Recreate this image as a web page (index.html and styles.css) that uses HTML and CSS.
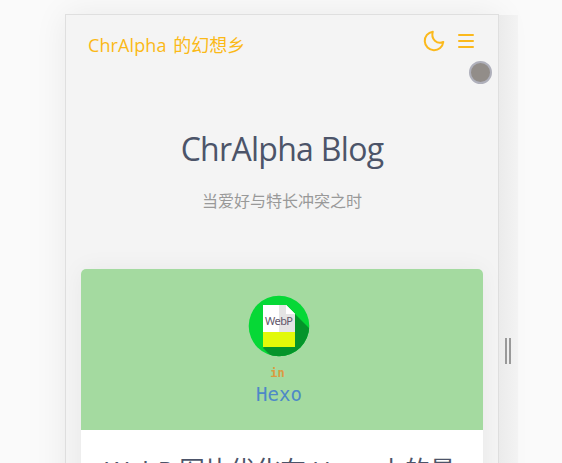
FILE: index.html
```html
<!DOCTYPE html>
<html lang="zh-CN">
<head>
<meta charset="utf-8">
<title>ChrAlpha Blog</title>
<link rel="stylesheet" href="styles.css">
</head>
<body>
<div class="preview">
  <div class="device">
    <header class="nav">
      <a class="brand">ChrAlpha <span class="brand-cjk">的幻想乡</span></a>
      <div class="actions">
        <svg class="moon" width="22" height="22" viewBox="0 0 22 22"><path d="M9.8 1.7A9.3 9.3 0 1 0 20.3 12C14.2 14.8 7.5 9.1 9.8 1.7Z"/></svg>
        <svg class="menu" width="16" height="16" viewBox="0 0 16 16"><path d="M1 2H15M1 8H15M1 14H15"/></svg>
      </div>
    </header>
    <section class="hero">
      <h1>ChrAlpha Blog</h1>
      <p>当爱好与特长冲突之时</p>
    </section>
    <article class="card">
      <div class="cover">
        <svg width="62" height="62" viewBox="0 0 62 62">
          <defs><clipPath id="disc"><circle cx="31" cy="31" r="30.3"/></clipPath></defs>
          <circle cx="31" cy="31" r="30.3" fill="#06d836"/>
          <path clip-path="url(#disc)" d="M15 53L47 19L70 42V70H32Z" fill="#05942a"/>
          <path d="M15 10H38L47 19V52H15Z" fill="#fff"/>
          <path d="M31 10H38L47 19V37H31Z" fill="#e4e4e4"/>
          <path d="M38 10L47 19H38Z" fill="#fff"/>
          <path d="M15 37H47V52H15Z" fill="#e2f909"/>
          <text class="webp" x="17" y="30" textLength="28">WebP</text>
        </svg>
        <span class="in">in</span>
        <span class="hexo">Hexo</span>
      </div>
      <h2>WebP 图片优化在 Hexo 上的最佳实践</h2>
    </article>
    <span class="touch"></span>
  </div>
  <div class="resizer"><span class="grip"></span></div>
</div>
</body>
</html>
```
FILE: styles.css
```css
* { box-sizing: border-box; }
body {
  margin: 0;
  height: 463px;
  overflow: hidden;
  background: #fafafa;
  font-family: "Open Sans", "Noto Sans CJK SC", sans-serif;
}
.preview {
  display: flex;
  height: 463px;
  padding: 14px 0 0 65px;
  overflow: hidden;
}
.device {
  position: relative;
  width: 434px;
  height: 600px;
  border: 1px solid #dfdfdf;
  background: #f4f4f4;
  box-shadow: 0 0 32px rgba(0, 0, 0, .07);
}
.nav {
  display: flex;
  justify-content: space-between;
  align-items: center;
  height: 60px;
  padding: 0 24px 0 22px;
  color: #fbb917;
}
.brand {
  padding-bottom: 2px;
  font-size: 18px;
  letter-spacing: .1px;
  white-space: nowrap;
}
.brand-cjk { margin-left: 2px; letter-spacing: 0; }
.actions {
  display: flex;
  align-items: center;
  gap: 13px;
  padding-bottom: 8px;
}
.actions svg {
  fill: none;
  stroke: #fbb91c;
  stroke-width: 2;
  stroke-linecap: round;
  stroke-linejoin: round;
}
.hero { height: 194px; padding-top: 52px; text-align: center; }
h1 {
  margin: 0;
  color: #4c5469;
  font-size: 32px;
  line-height: 44px;
  font-weight: 400;
  letter-spacing: -.7px;
}
.hero p {
  margin: 18px 0 0;
  color: #999;
  font-size: 16px;
  line-height: 24px;
}
.card {
  height: 340px;
  margin: 0 15px;
  overflow: hidden;
  border-radius: 5px 5px 0 0;
  background: #fff;
  box-shadow: 0 0 24px rgba(0, 0, 0, .05);
}
.cover {
  display: flex;
  flex-direction: column;
  align-items: center;
  height: 161px;
  padding: 26px 6px 0 0;
  background: #a4daa0;
}
.webp { font: 11px "Noto Sans", sans-serif; fill: #62566a; }
.in {
  margin: 8px 3px 0 0;
  color: #dc9a40;
  font: bold 12px/16px "DejaVu Sans Mono", monospace;
}
.hexo {
  color: #4d89c7;
  font: 19px/26px "DejaVu Sans Mono", monospace;
}
h2 {
  margin: 21px 22px 0 18px;
  color: #4c5469;
  font-size: 25.6px;
  line-height: 40px;
  font-weight: 400;
  letter-spacing: -.3px;
  text-align: center;
}
.touch {
  position: absolute;
  top: 46px;
  left: 403px;
  width: 23px;
  height: 23px;
  border: 2px solid #afb0bb;
  border-radius: 50%;
  background: #928d89;
}
.resizer {
  display: flex;
  justify-content: center;
  width: 19px;
  height: 600px;
  margin-top: 1px;
  padding: 323px 2px 0 0;
  background: linear-gradient(90deg, #ebebeb, #f3f3f3);
  position: relative;
}
.grip {
  width: 6px;
  height: 26px;
  border: solid #999;
  border-width: 0 2px;
}
```
